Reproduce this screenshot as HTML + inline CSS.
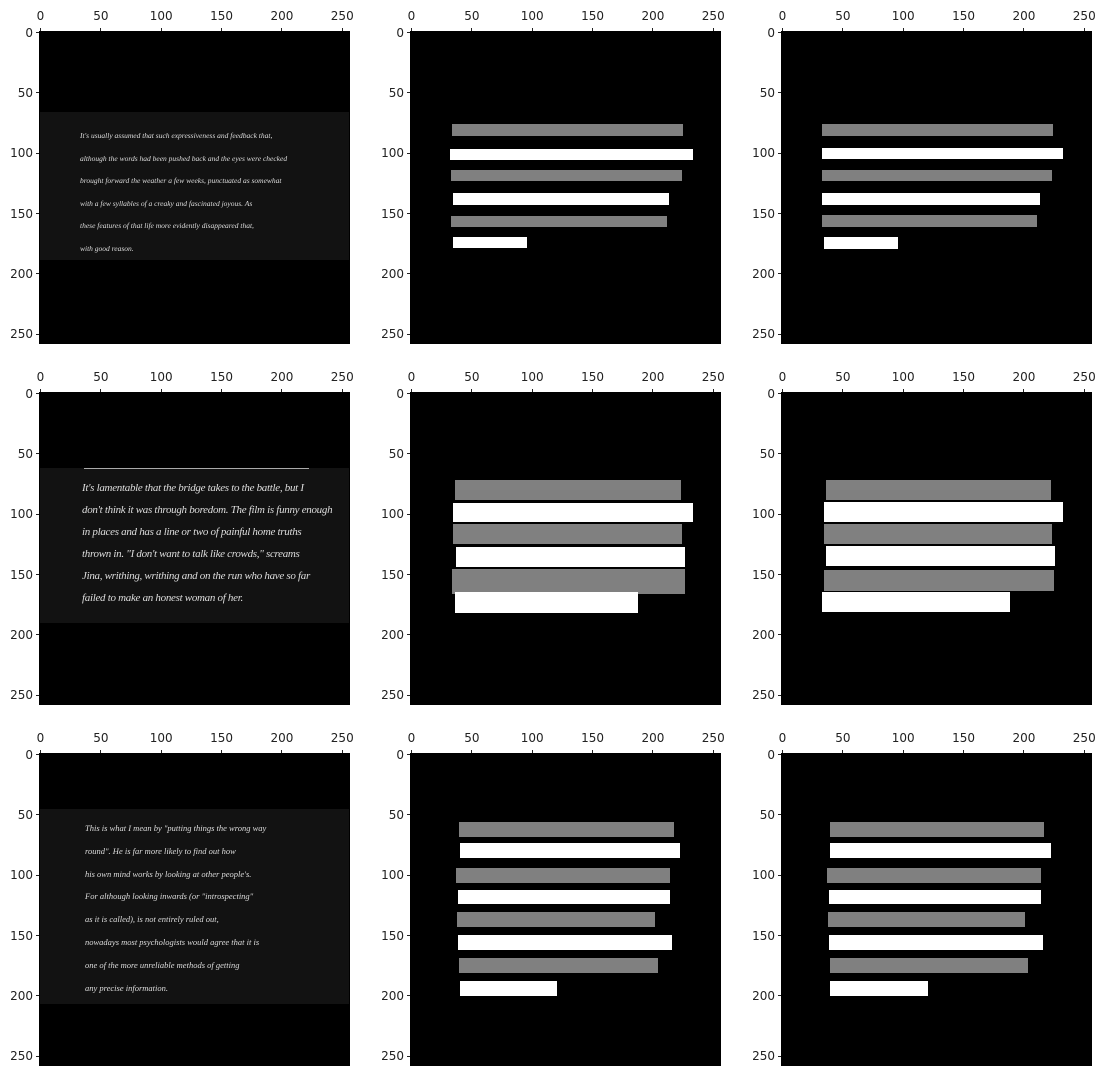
<!DOCTYPE html>
<html><head><meta charset="utf-8"><style>
body{margin:0;width:1114px;height:1086px;background:#fff;position:relative;overflow:hidden;font-family:"DejaVu Sans","Liberation Sans",sans-serif;font-size:12px;color:#222}
.ax{position:absolute;width:309px;height:311px;background:#000;outline:1px solid #000;overflow:hidden}
.b{position:absolute}
.g{background:#808080}.w{background:#fff}
.band{position:absolute;left:0;width:309px;background:#121212}
.hw{position:absolute;color:#ddd;font-family:"Liberation Serif",serif;font-style:italic;white-space:nowrap}
.t{position:absolute;font-size:12px;line-height:12px}
.tk{position:absolute;background:#222}
</style></head><body>
<div id="c"></div>
<!-- row1 -->
<div class="ax" style="left:40px;top:32px">
 <div class="band" style="top:80px;height:148px"></div>
 <div class="hw" style="left:40px;top:93px;font-size:7.5px;line-height:22.5px">It's usually assumed that such expressiveness and feedback that,<br>although the words had been pushed back and the eyes were checked<br>brought forward the weather a few weeks, punctuated as somewhat<br>with a few syllables of a creaky and fascinated joyous. As<br>these features of that life more evidently disappeared that,<br>with good reason.</div>
</div>
<div class="ax" style="left:411px;top:32px">
 <div class="b g" style="left:41px;top:92px;width:231px;height:12px"></div>
 <div class="b w" style="left:39px;top:117px;width:243px;height:11px"></div>
 <div class="b g" style="left:40px;top:138px;width:231px;height:11px"></div>
 <div class="b w" style="left:42px;top:161px;width:216px;height:12px"></div>
 <div class="b g" style="left:40px;top:184px;width:216px;height:11px"></div>
 <div class="b w" style="left:42px;top:205px;width:74px;height:11px"></div>
</div>
<div class="ax" style="left:782px;top:32px">
 <div class="b g" style="left:40px;top:92px;width:231px;height:12px"></div>
 <div class="b w" style="left:40px;top:116px;width:241px;height:11px"></div>
 <div class="b g" style="left:40px;top:138px;width:230px;height:11px"></div>
 <div class="b w" style="left:40px;top:161px;width:218px;height:12px"></div>
 <div class="b g" style="left:40px;top:183px;width:215px;height:12px"></div>
 <div class="b w" style="left:42px;top:205px;width:74px;height:12px"></div>
</div>
<!-- row2 -->
<div class="ax" style="left:40px;top:393px">
 <div class="band" style="top:75px;height:155px"></div>
 <div class="b" style="left:44px;top:75px;width:225px;height:1px;background:#aaa"></div>
 <div class="hw" style="left:42px;top:84px;font-size:11px;line-height:22px;letter-spacing:-0.3px">It's lamentable that the bridge takes to the battle, but I<br>don't think it was through boredom. The film is funny enough<br>in places and has a line or two of painful home truths<br>thrown in. "I don't want to talk like crowds," screams<br>Jina, writhing, writhing and on the run who have so far<br>failed to make an honest woman of her.</div>
</div>
<div class="ax" style="left:411px;top:393px">
 <div class="b g" style="left:44px;top:87px;width:226px;height:20px"></div>
 <div class="b w" style="left:42px;top:110px;width:240px;height:19px"></div>
 <div class="b g" style="left:42px;top:131px;width:229px;height:20px"></div>
 <div class="b w" style="left:45px;top:154px;width:229px;height:20px"></div>
 <div class="b g" style="left:41px;top:176px;width:233px;height:25px"></div>
 <div class="b w" style="left:44px;top:199px;width:183px;height:21px"></div>
</div>
<div class="ax" style="left:782px;top:393px">
 <div class="b g" style="left:44px;top:87px;width:225px;height:20px"></div>
 <div class="b w" style="left:42px;top:109px;width:239px;height:20px"></div>
 <div class="b g" style="left:42px;top:131px;width:228px;height:20px"></div>
 <div class="b w" style="left:44px;top:153px;width:229px;height:20px"></div>
 <div class="b g" style="left:42px;top:177px;width:230px;height:21px"></div>
 <div class="b w" style="left:40px;top:199px;width:188px;height:20px"></div>
</div>
<!-- row3 -->
<div class="ax" style="left:40px;top:754px">
 <div class="band" style="top:55px;height:195px"></div>
 <div class="hw" style="left:45px;top:63px;font-size:8.5px;line-height:22.8px">This is what I mean by "putting things the wrong way<br>round". He is far more likely to find out how<br>his own mind works by looking at other people's.<br>For although looking inwards (or "introspecting"<br>as it is called), is not entirely ruled out,<br>nowadays most psychologists would agree that it is<br>one of the more unreliable methods of getting<br>any precise information.</div>
</div>
<div class="ax" style="left:411px;top:754px">
 <div class="b g" style="left:48px;top:68px;width:215px;height:15px"></div>
 <div class="b w" style="left:49px;top:89px;width:220px;height:15px"></div>
 <div class="b g" style="left:45px;top:114px;width:214px;height:15px"></div>
 <div class="b w" style="left:47px;top:136px;width:212px;height:14px"></div>
 <div class="b g" style="left:46px;top:158px;width:198px;height:15px"></div>
 <div class="b w" style="left:47px;top:181px;width:214px;height:15px"></div>
 <div class="b g" style="left:48px;top:204px;width:199px;height:15px"></div>
 <div class="b w" style="left:49px;top:227px;width:97px;height:15px"></div>
</div>
<div class="ax" style="left:782px;top:754px">
 <div class="b g" style="left:48px;top:68px;width:214px;height:15px"></div>
 <div class="b w" style="left:48px;top:89px;width:221px;height:15px"></div>
 <div class="b g" style="left:45px;top:114px;width:214px;height:15px"></div>
 <div class="b w" style="left:47px;top:136px;width:212px;height:14px"></div>
 <div class="b g" style="left:46px;top:158px;width:197px;height:15px"></div>
 <div class="b w" style="left:47px;top:181px;width:214px;height:15px"></div>
 <div class="b g" style="left:48px;top:204px;width:198px;height:15px"></div>
 <div class="b w" style="left:48px;top:227px;width:98px;height:15px"></div>
</div>
<script>
var lefts=[40,411,782],tops=[32,393,754],s=309/256,h='';
tops.forEach(function(T){lefts.forEach(function(L){
 [0,50,100,150,200,250].forEach(function(v){
  var x=L+v*s+0.5, y=T+v*s+0.5;
  h+='<div class="tk" style="left:'+(x-0.5)+'px;top:'+(T-4)+'px;width:1px;height:4px"></div>';
  h+='<div class="t" style="left:'+(x-20)+'px;top:'+(T-22)+'px;width:40px;text-align:center">'+v+'</div>';
  h+='<div class="tk" style="left:'+(L-4)+'px;top:'+(y-0.5)+'px;width:4px;height:1px"></div>';
  h+='<div class="t" style="left:'+(L-47)+'px;top:'+(y-6)+'px;width:40px;text-align:right">'+v+'</div>';
 });
});});
document.getElementById('c').innerHTML=h;
</script>
</body></html>
